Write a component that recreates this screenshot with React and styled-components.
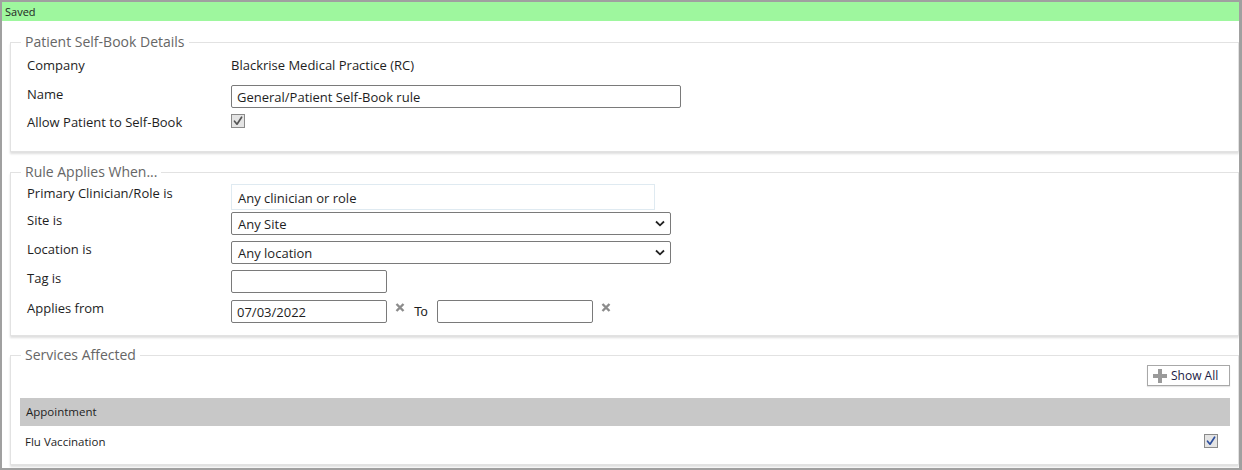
import React from "react";
import styled, { createGlobalStyle } from "styled-components";

const GlobalStyle = createGlobalStyle`
  html, body {
    margin: 0;
    padding: 0;
    background: #ffffff;
  }
  body {
    font-family: "Open Sans", "Noto Sans", Arial, sans-serif;
    color: #1e1e1e;
  }
`;

const Frame = styled.div`
  width: 1242px;
  height: 470px;
  box-sizing: border-box;
  border: 2px solid #a0a0a0;
  border-right-width: 3px;
  background: #ffffff;
  overflow: hidden;
`;

const StatusBar = styled.div`
  height: 19px;
  background: #9ef79e;
  font-size: 11px;
  line-height: 19px;
  padding-left: 3px;
  color: #1e1e1e;
`;

const Content = styled.div`
  padding: 0 0 0 8px;
`;

const Section = styled.fieldset`
  margin: ${(p) => p.$top}px 0 0 0;
  padding: ${(p) => p.$pad};
  border: 1px solid #e2e2e2;
  box-shadow: 0 2px 2px rgba(0, 0, 0, 0.13);
  min-width: 0;
  height: ${(p) => p.$height}px;
  box-sizing: border-box;
`;

const Legend = styled.legend`
  margin-left: ${(p) => p.$shift}px;
  padding: 0 4px;
  font-size: 14px;
  line-height: 18px;
  color: #666666;
`;

const Row = styled.div`
  display: grid;
  grid-template-columns: 204px 1fr;
  align-items: start;
  height: ${(p) => p.$height}px;
`;

const Label = styled.div`
  font-size: 13px;
  line-height: 17px;
  padding-top: ${(p) => p.$offset || 0}px;
  color: #1e1e1e;
`;

const Value = styled.div`
  font-size: 13px;
  line-height: 17px;
  color: #1e1e1e;
`;

const TextInput = styled.input`
  width: ${(p) => p.$width}px;
  height: 23px;
  box-sizing: border-box;
  border: 1px solid #7a7a7a;
  border-radius: 2px;
  padding: 0 5px;
  font-family: inherit;
  font-size: 13px;
  color: #1e1e1e;
  background: #ffffff;
  outline: none;
`;

const RoleBox = styled.div`
  width: 424px;
  height: 26px;
  box-sizing: border-box;
  border: 1px solid #dfeaf1;
  padding: 0 6px;
  font-size: 13px;
  line-height: 27px;
  color: #1e1e1e;
`;

const SelectBox = styled.div`
  width: 440px;
  height: 23px;
  box-sizing: border-box;
  border: 1px solid #7a7a7a;
  border-radius: 2px;
  padding: 0 5px 0 6px;
  display: flex;
  align-items: center;
  justify-content: space-between;
  font-size: 13px;
  color: #1e1e1e;
`;

const DateGroup = styled.div`
  display: flex;
  align-items: flex-start;
`;

const ClearBtn = styled.span`
  display: inline-flex;
  width: 10px;
  height: 10px;
  margin: 3px 0 0 8px;
`;

const ToLabel = styled.span`
  font-size: 13px;
  line-height: 16px;
  margin: 4px 9px 0 9px;
  font-family: "Liberation Sans", Arial, sans-serif;
  color: #1e1e1e;
`;

const Toolbar = styled.div`
  display: flex;
  justify-content: flex-end;
  margin-top: 1px;
  margin-bottom: 12px;
`;

const ToolButton = styled.button`
  display: flex;
  align-items: center;
  gap: 4px;
  height: 21px;
  width: 83px;
  box-sizing: border-box;
  border: 1px solid #a8a8a8;
  background: #ffffff;
  padding: 0 5px;
  font-family: inherit;
  font-size: 12px;
  color: #1b1b45;
  box-shadow: 0 1px 1px rgba(0, 0, 0, 0.1);
`;

const GroupHeader = styled.div`
  height: 28px;
  background: #c8c8c8;
  font-size: 11.5px;
  line-height: 28px;
  padding-left: 6px;
  color: #1e1e1e;
`;

const ServiceRow = styled.div`
  display: flex;
  align-items: center;
  justify-content: space-between;
  height: 30px;
  padding: 0 12px 0 5px;
  font-size: 11.5px;
  color: #1e1e1e;
`;

const CheckBox = ({ tick = "#555555" }) => (
  <svg width="14" height="14" viewBox="0 0 14 14">
    <rect x="0.5" y="0.5" width="13" height="13" fill="#e4e4e4" stroke="#8a8a8a" />
    <path
      d="M3.5 7.2 L6 10.2 L10.6 3.2"
      fill="none"
      stroke={tick}
      strokeWidth="1.7"
      strokeLinecap="round"
      strokeLinejoin="round"
    />
  </svg>
);

const Chevron = () => (
  <svg width="10" height="7" viewBox="0 0 10 7">
    <path d="M1 1.5 L5 5.3 L9 1.5" fill="none" stroke="#222" strokeWidth="1.8" />
  </svg>
);

const ClearIcon = () => (
  <ClearBtn>
    <svg width="10" height="9" viewBox="0 0 10 9">
      <path d="M1.5 1 L8.5 8 M8.5 1 L1.5 8" stroke="#8c8c8c" strokeWidth="2.4" />
    </svg>
  </ClearBtn>
);

const PlusIcon = () => (
  <svg width="14" height="14" viewBox="0 0 14 14">
    <path d="M5 0 H9 V5 H14 V9 H9 V14 H5 V9 H0 V5 H5 Z" fill="#9a9a9a" />
  </svg>
);

const App = () => {
  return (
    <Frame>
      <GlobalStyle />
      <StatusBar>Saved</StatusBar>
      <Content>
        <Section $top={12} $height={119} $pad="6px 16px 0 16px">
          <Legend $shift={-6}>Patient Self-Book Details</Legend>
          <Row $height={28}>
            <Label>Company</Label>
            <Value>Blackrise Medical Practice (RC)</Value>
          </Row>
          <Row $height={29}>
            <Label $offset={1}>Name</Label>
            <TextInput $width={450} value="General/Patient Self-Book rule" readOnly />
          </Row>
          <Row $height={20}>
            <Label>Allow Patient to Self-Book</Label>
            <CheckBox />
          </Row>
        </Section>

        <Section $top={11} $height={173} $pad="3px 16px 0 16px">
          <Legend $shift={-6}>Rule Applies When...</Legend>
          <Row $height={28}>
            <Label $offset={1}>Primary Clinician/Role is</Label>
            <RoleBox>Any clinician or role</RoleBox>
          </Row>
          <Row $height={29}>
            <Label>Site is</Label>
            <SelectBox>
              Any Site
              <Chevron />
            </SelectBox>
          </Row>
          <Row $height={29}>
            <Label>Location is</Label>
            <SelectBox>
              Any location
              <Chevron />
            </SelectBox>
          </Row>
          <Row $height={30}>
            <Label>Tag is</Label>
            <TextInput $width={156} value="" readOnly />
          </Row>
          <Row $height={28}>
            <Label>Applies from</Label>
            <DateGroup>
              <TextInput $width={156} value="07/03/2022" readOnly />
              <ClearIcon />
              <ToLabel>To</ToLabel>
              <TextInput $width={156} value="" readOnly />
              <ClearIcon />
            </DateGroup>
          </Row>
        </Section>

        <Section $top={10} $height={119} $pad="0 8px 0 9px">
          <Legend $shift={1}>Services Affected</Legend>
          <Toolbar>
            <ToolButton>
              <PlusIcon />
              Show All
            </ToolButton>
          </Toolbar>
          <GroupHeader>Appointment</GroupHeader>
          <ServiceRow>
            Flu Vaccination
            <CheckBox tick="#2d4f9e" />
          </ServiceRow>
        </Section>
      </Content>
    </Frame>
  );
};

export default App;
